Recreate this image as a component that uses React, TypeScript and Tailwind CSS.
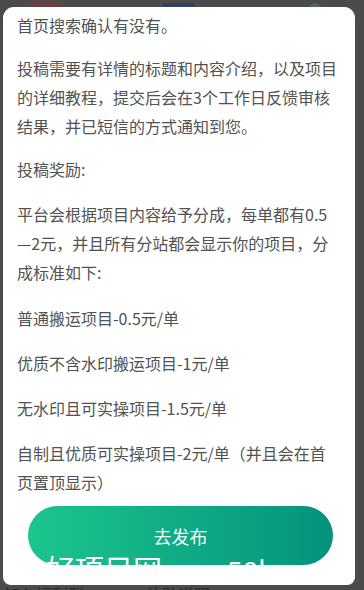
import React from 'react';

const paragraphs: { text: string; cls: string }[] = [
  { text: '首页搜索确认有没有。', cls: '' },
  {
    text: '投稿需要有详情的标题和内容介绍，以及项目的详细教程，提交后会在3个工作日反馈审核结果，并已短信的方式通知到您。',
    cls: 'mt-[14px]',
  },
  { text: '投稿奖励:', cls: 'mt-[14px]' },
  {
    text: '平台会根据项目内容给予分成，每单都有0.5—2元，并且所有分站都会显示你的项目，分成标准如下:',
    cls: 'mt-[16px]',
  },
  { text: '普通搬运项目-0.5元/单', cls: 'mt-[17px]' },
  { text: '优质不含水印搬运项目-1元/单', cls: 'mt-[16px]' },
  { text: '无水印且可实操项目-1.5元/单', cls: 'mt-[16px]' },
  { text: '自制且优质可实操项目-2元/单（并且会在首页置顶显示）', cls: 'mt-[16px]' },
];

export default function App() {
  return (
    <div
      className="relative w-[364px] h-[590px] overflow-hidden bg-[#4b4b4b] flex flex-col"
      style={{ fontFamily: '"Noto Sans CJK SC", "Noto Sans", sans-serif' }}
    >
      {/* page behind the overlay, peeking at the top */}
      <div className="h-[7px] shrink-0 overflow-hidden flex items-start">
        <div className="ml-[28px] mt-[1px] w-[34px] h-[14px] shrink-0 rounded-full bg-[#6a3f42]" />
        <div className="ml-[100px] mt-[3px] w-[33px] h-[14px] shrink-0 rounded-[3px] bg-[#2f4262]" />
        <div className="ml-[114px] mt-[3px] w-[12px] h-[12px] shrink-0 rounded-full bg-[#4d6657]" />
      </div>

      {/* dialog */}
      <div className="mx-[3px] w-[352px] shrink-0 bg-white rounded-t-[11px] rounded-b-[8px] pl-[14px] pr-[16px] pt-[3.5px] pb-[20px] flex flex-col">
        <div className="text-[16px] leading-[29px] text-[#525252]">
          {paragraphs.map((p, i) => (
            <p key={i} className={p.cls}>
              {p.text}
            </p>
          ))}
        </div>
        <button className="mt-[9.5px] ml-[11px] w-[305px] h-[59px] rounded-full bg-linear-to-r from-[#1cc58e] to-[#03937c] text-[#f2fbf7] text-[18px] flex items-center justify-center pt-[2px]">
          去发布
        </button>
      </div>

      {/* page behind, bottom */}
      <div className="h-[5px] shrink-0 overflow-hidden flex items-start gap-[62px] pl-[4px] pt-[1px] text-[16px] leading-[16px] text-[#272727]">
        <span>加入福利群</span>
        <span>补贴说明</span>
      </div>

      {/* stray header text drawn over the dialog */}
      <div className="absolute left-[46px] top-[554px] flex items-start gap-[65px] text-white whitespace-nowrap pointer-events-none leading-none">
        <span className="text-[29px]">好项目网</span>
        <span className="text-[28px] mt-[2px]">58l</span>
      </div>
    </div>
  );
}
